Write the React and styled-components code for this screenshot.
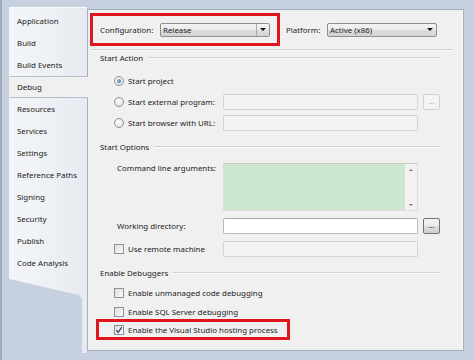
import React from 'react';
import styled, { createGlobalStyle } from 'styled-components';

const Global = createGlobalStyle`
  html, body { margin: 0; padding: 0; }
  body {
    background: #c6d0de;
    font-family: "Noto Sans", "Open Sans", sans-serif;
    font-size: 7.9px;
    color: #1c1c1c;
  }
`;

const Window = styled.div`
  width: 474px;
  height: 360px;
  box-sizing: border-box;
  display: flex;
  align-items: flex-start;
  padding: 7px 10px 0 7px;
  border-left: 2px solid #9eabbd;
  background: #c6d0de;
  overflow: hidden;
`;

const Sidebar = styled.div`
  position: relative;
  width: 78px;
  height: 346px;
  flex: none;
  padding-top: 3px;
  box-sizing: border-box;
  display: flex;
  flex-direction: column;
  &::before {
    content: '';
    position: absolute;
    inset: 0;
    background: linear-gradient(to right, #f3f5f8, #e7ebf1);
    border-top: 1px solid #fbfcfd;
    clip-path: polygon(0 0, 100% 0, 100% 100%, 73px 100%, 73px 292px, 70px 288px, 0 272px);
  }
`;

const Tab = styled.div`
  position: relative;
  z-index: 1;
  height: 22px;
  box-sizing: border-box;
  display: flex;
  align-items: center;
  padding-left: 8px;
  color: #222;
  ${p => p.$active && `
    background: #f0f0f0;
    border-top: 1px solid #b4bfcd;
    border-bottom: 1px solid #b4bfcd;
    border-left: 1px solid #fbf3d6;
    padding-left: 7px;
    margin-right: -1px;
  `}
`;

const Panel = styled.div`
  flex: 1;
  margin-top: 2px;
  height: 342px;
  box-sizing: border-box;
  background: #f0f0f0;
  border: 1px solid #a3afbf;
  box-shadow: inset -1px 0 0 #fafafa;
  display: flex;
  flex-direction: column;
`;

const RedBox = styled.div`
  border: 3px solid #e0161f;
  box-sizing: border-box;
  display: flex;
  align-items: center;
  margin-top: ${p => p.$mt}px;
  margin-left: ${p => p.$ml}px;
  width: ${p => p.$w}px;
  height: ${p => p.$h}px;
  padding-left: ${p => p.$pl}px;
  gap: 7px;
  flex: none;
`;

const ConfigRow = styled.div`
  display: flex;
  align-items: center;
  margin-top: 3px;
`;

const Label = styled.span`
  white-space: nowrap;
  padding-left: ${p => p.$pl || 0}px;
`;

const ComboLabel = styled.span`
  width: 53px;
  white-space: nowrap;
`;

const PlatformLabel = styled.span`
  margin-left: 6px;
  margin-right: 8px;
  width: 33px;
  white-space: nowrap;
`;

const Combo = styled.div`
  width: 110px;
  height: 14px;
  flex: none;
  box-sizing: border-box;
  border: 1px solid #8d8f91;
  border-radius: 2px;
  background: linear-gradient(#f3f3f3 0%, #ececec 45%, #dedede 50%, #d3d3d3 100%);
  display: flex;
  align-items: center;
  padding-left: 2px;
`;

const ComboText = styled.span`
  flex: 1;
  white-space: nowrap;
`;

const ComboArrow = styled.div`
  width: 13px;
  height: 100%;
  display: flex;
  align-items: center;
  justify-content: center;
  border-left: ${p => (p.$split ? '1px solid #a9abae' : 'none')};
  box-sizing: border-box;
  &::after {
    content: '';
    border-left: 3px solid transparent;
    border-right: 3px solid transparent;
    border-top: 3px solid #111;
  }
`;

const Separator = styled.div`
  margin-top: 3px;
  margin-left: 4px;
  width: 361px;
  height: 1px;
  background: #cfcfcf;
  border-bottom: 1px solid #fbfbfb;
`;

const GroupHeader = styled.div`
  display: flex;
  align-items: center;
  height: 14px;
  margin-top: ${p => p.$mt}px;
  padding-left: 12px;
  width: 353px;
  box-sizing: border-box;
  white-space: nowrap;
  &::after {
    content: '';
    flex: 1;
    height: 1px;
    background: #d2d2d2;
    border-bottom: 1px solid #fbfbfb;
    margin-left: 5px;
  }
`;

const FormRow = styled.div`
  display: grid;
  grid-template-columns: 130px 195px 17px;
  column-gap: 5px;
  align-items: ${p => (p.$top ? 'start' : 'center')};
  height: ${p => p.$h || 16}px;
  margin-top: ${p => p.$mt}px;
`;

const Choice = styled.label`
  display: flex;
  align-items: center;
  gap: 4px;
  padding-left: ${p => p.$pl ?? 26}px;
  white-space: nowrap;
  height: ${p => p.$h || 16}px;
`;

const Radio = styled.span`
  flex: none;
  width: 10px;
  height: 10px;
  box-sizing: border-box;
  border-radius: 50%;
  border: 1px solid #8e9297;
  background: radial-gradient(circle at 40% 35%, #fdfdfd, #d9dbde);
  display: flex;
  align-items: center;
  justify-content: center;
  &::after {
    content: '';
    display: ${p => (p.$on ? 'block' : 'none')};
    width: 4px;
    height: 4px;
    border-radius: 50%;
    background: radial-gradient(circle at 35% 35%, #8fb6de, #2b5f94);
  }
`;

const Box = styled.span`
  flex: none;
  width: 10px;
  height: 10px;
  box-sizing: border-box;
  border: 1px solid #8e9297;
  background: linear-gradient(135deg, #dcdee1, #fafafa);
  display: flex;
  align-items: center;
  justify-content: center;
`;

const TextField = styled.div`
  height: 16px;
  box-sizing: border-box;
  border: 1px solid ${p => (p.$disabled ? '#d2d3d5' : '#b5b8bd')};
  border-top-color: ${p => (p.$disabled ? '#cfd0d2' : '#a7aab0')};
  border-radius: 2px;
  background: ${p => (p.$disabled ? '#f3f3f3' : '#ffffff')};
`;

const TextArea = styled.div`
  height: 48px;
  box-sizing: border-box;
  border: 1px solid #dcdcdc;
  border-top-color: #c8c8c8;
  background: #cde8cf;
  display: flex;
  justify-content: flex-end;
`;

const ScrollBar = styled.div`
  width: 12px;
  background: #f2f2f2;
  display: flex;
  flex-direction: column;
  justify-content: space-between;
  align-items: center;
  padding: 5px 0 4px;
`;

const ScrollArrow = styled.span`
  width: 0;
  height: 0;
  border-left: 2px solid transparent;
  border-right: 2px solid transparent;
  ${p => (p.$up ? 'border-bottom: 2px solid #7a7a7a;' : 'border-top: 2px solid #7a7a7a;')}
`;

const Browse = styled.div`
  height: 16px;
  box-sizing: border-box;
  border: 1px solid ${p => (p.$disabled ? '#d0d1d3' : '#707275')};
  border-radius: 2px;
  background: ${p => (p.$disabled ? '#f4f4f4' : 'linear-gradient(#f4f4f4 0%, #ebebeb 45%, #dddddd 50%, #cfcfcf 100%)')};
  color: ${p => (p.$disabled ? '#a8a8a8' : '#222')};
  display: flex;
  align-items: center;
  justify-content: center;
  font-size: 7px;
  line-height: 1;
  padding-bottom: 2px;
`;

const Tick = () => (
  <svg width="8" height="8" viewBox="0 0 8 8">
    <path d="M1.3 4.2 L3.1 6.4 L6.8 1.2" fill="none" stroke="#34466b" strokeWidth="1.3" />
  </svg>
);

const tabs = ['Application', 'Build', 'Build Events', 'Debug', 'Resources', 'Services', 'Settings', 'Reference Paths', 'Signing', 'Security', 'Publish', 'Code Analysis'];

export default function App() {
  return (
    <>
      <Global />
      <Window>
        <Sidebar>
          {tabs.map(t => (
            <Tab key={t} $active={t === 'Debug'}>{t}</Tab>
          ))}
        </Sidebar>
        <Panel>
          <ConfigRow>
            <RedBox $mt={0} $ml={2} $w={190} $h={33} $pl={7}>
              <ComboLabel>Configuration:</ComboLabel>
              <Combo>
                <ComboText>Release</ComboText>
                <ComboArrow $split />
              </Combo>
            </RedBox>
            <PlatformLabel>Platform:</PlatformLabel>
            <Combo>
              <ComboText>Active (x86)</ComboText>
              <ComboArrow />
            </Combo>
          </ConfigRow>
          <Separator />

          <GroupHeader $mt={0}>Start Action</GroupHeader>
          <FormRow $mt={8}>
            <Choice><Radio $on />Start project</Choice>
          </FormRow>
          <FormRow $mt={5}>
            <Choice><Radio />Start external program:</Choice>
            <TextField $disabled />
            <Browse $disabled>...</Browse>
          </FormRow>
          <FormRow $mt={5}>
            <Choice><Radio />Start browser with URL:</Choice>
            <TextField $disabled />
          </FormRow>

          <GroupHeader $mt={9}>Start Options</GroupHeader>
          <FormRow $mt={9} $h={48} $top>
            <Label $pl={29}>Command line arguments:</Label>
            <TextArea>
              <ScrollBar>
                <ScrollArrow $up />
                <ScrollArrow />
              </ScrollBar>
            </TextArea>
          </FormRow>
          <FormRow $mt={7}>
            <Label $pl={29}>Working directory:</Label>
            <TextField />
            <Browse>...</Browse>
          </FormRow>
          <FormRow $mt={7}>
            <Choice><Box />Use remote machine</Choice>
            <TextField $disabled />
          </FormRow>

          <GroupHeader $mt={9}>Enable Debuggers</GroupHeader>
          <FormRow $mt={6} $h={14}>
            <Choice $h={14}><Box />Enable unmanaged code debugging</Choice>
          </FormRow>
          <FormRow $mt={5} $h={14}>
            <Choice $h={14}><Box />Enable SQL Server debugging</Choice>
          </FormRow>
          <RedBox $mt={0} $ml={8} $w={194} $h={21} $pl={15}>
            <Choice $pl={0} $h={14}><Box><Tick /></Box>Enable the Visual Studio hosting process</Choice>
          </RedBox>
        </Panel>
      </Window>
    </>
  );
}
